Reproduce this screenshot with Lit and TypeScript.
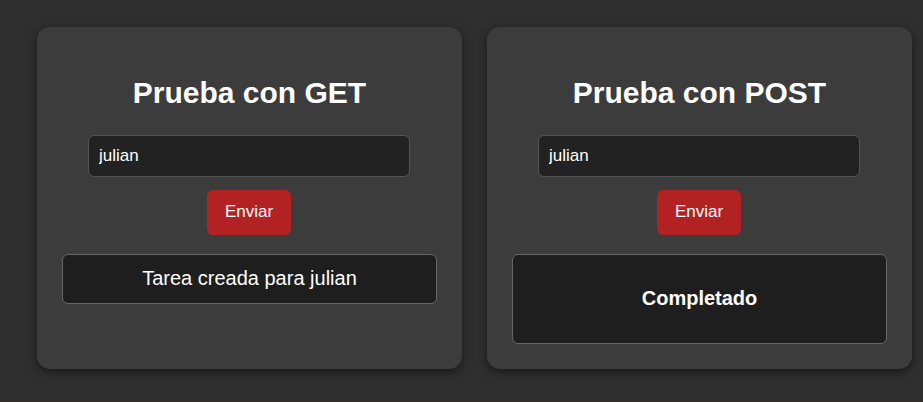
import { LitElement, html, css } from "lit";
import { customElement, property } from "lit/decorators.js";

@customElement("request-card")
class RequestCard extends LitElement {
  @property() method = "GET";
  @property() name = "";

  static styles = css`
    :host {
      display: flex;
      flex-direction: column;
      box-sizing: border-box;
      min-width: 0;
      padding: 48px 25px 25px;
      border-radius: 13px;
      background: #3c3c3c;
      box-shadow: 0 3px 10px rgba(0, 0, 0, 0.5);
      text-align: center;
    }
    .title {
      margin: 0 0 24px;
      font-size: 30px;
      line-height: 36px;
      font-weight: 700;
    }
    .form {
      display: flex;
      flex-direction: column;
      align-items: center;
      gap: 13px;
      margin: 0 27px 19px 26px;
    }
    .field,
    .send {
      box-sizing: border-box;
      border-radius: 6px;
      font-family: inherit;
      font-size: 17px;
      line-height: 20px;
      color: #fff;
    }
    .field {
      width: 100%;
      padding: 10px;
      border: 1px solid #555;
      background: #222;
    }
    .send {
      padding: 12px 18px 13px;
      border: none;
      background: #b22222;
      cursor: pointer;
    }
    .result {
      display: block;
      padding: 11px 12px 13px;
      border: 1px solid #666;
      border-radius: 6px;
      background: #1e1e1e;
      font-size: 20px;
      line-height: 24px;
    }
    ::slotted(h4) {
      margin: 20px 0;
      font-size: 20px;
      line-height: 24px;
    }
  `;

  render() {
    return html`
      <h2 class="title">Prueba con ${this.method}</h2>
      <form class="form" @submit=${(e: Event) => e.preventDefault()}>
        <input class="field" type="text" aria-label="Nombre" .value=${this.name} />
        <button class="send" type="submit">Enviar</button>
      </form>
      <div class="result" role="status"><slot></slot></div>
    `;
  }
}

@customElement("app-root")
class AppRoot extends LitElement {
  static styles = css`
    :host {
      display: block;
      box-sizing: border-box;
      min-height: 100vh;
      padding: 27px 11px 32px 37px;
      border-bottom: 1px solid #352c2e;
      background: #2f2f2f;
      color: #fff;
      font-family: Arial, "Liberation Sans", sans-serif;
    }
    .cards {
      display: grid;
      grid-template-columns: 1fr 1fr;
      gap: 25px;
    }
  `;

  render() {
    return html`
      <main class="cards">
        <request-card method="GET" name="julian">Tarea creada para julian</request-card>
        <request-card method="POST" name="julian"><h4>Completado</h4></request-card>
      </main>
    `;
  }
}
